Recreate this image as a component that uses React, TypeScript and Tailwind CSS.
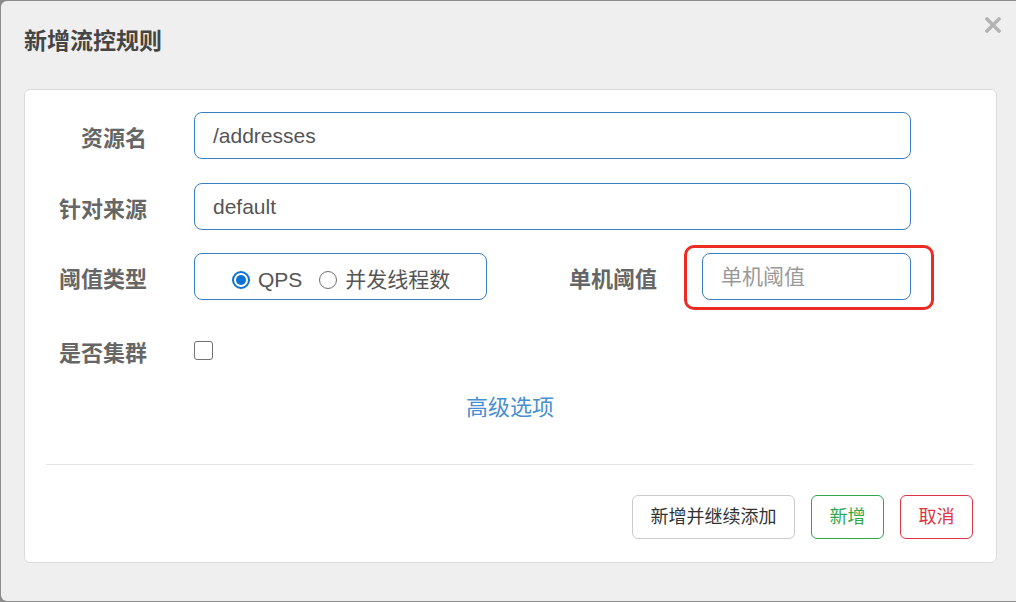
// 新增流控规则 — flow rule dialog

const font = "font-['Liberation_Sans','Noto_Sans_CJK_SC',sans-serif]";

function Label({ text, width = 'w-[101px]' }: { text: string; width?: string }) {
    return (
        <div className={`${width} shrink-0 text-right pt-[7px] text-[22px] leading-[30px] font-bold text-[#666]`}>
            {text}
        </div>
    );
}

function TextInput({ value, placeholder, width }: { value?: string; placeholder?: string; width: string }) {
    return (
        <div
            className={`${width} h-[47px] rounded-[8px] border border-[#3a7fc1] bg-white flex items-center pl-[18px] text-[21px] leading-[30px] ${
                value ? 'text-[#555]' : 'text-[#999]'
            }`}
        >
            {value || placeholder}
        </div>
    );
}

function Radio({ checked, label }: { checked?: boolean; label: string }) {
    return (
        <div className="flex items-center gap-[8px]">
            {checked ? (
                <span className="w-[18px] h-[18px] rounded-full border-2 border-[#0b72d9] flex items-center justify-center">
                    <span className="w-[10px] h-[10px] rounded-full bg-[#0b72d9]" />
                </span>
            ) : (
                <span className="w-[18px] h-[18px] rounded-full border-[1.5px] border-[#6f6f6f]" />
            )}
            <span className="text-[21px] leading-[30px] text-[#555]">{label}</span>
        </div>
    );
}

export default function App() {
    return (
        <div className={`w-[1016px] h-[602px] overflow-hidden bg-[#8c8c8c] pt-px pl-px ${font}`}>
            <div className="w-[1015px] h-[600px] rounded-l-md bg-[#efefef]">
                {/* Header */}
                <div className="h-[88px] flex items-start justify-between pl-[23px] pr-[15px]">
                    <h4 className="pt-[25px] text-[23px] leading-[30px] font-bold text-[#454545]">新增流控规则</h4>
                    <svg width="16" height="16" viewBox="0 0 16 16" className="mt-[16px]">
                        <path d="M2 2L14 14M14 2L2 14" stroke="#b3b3b3" strokeWidth="3.4" strokeLinecap="square" />
                    </svg>
                </div>

                {/* Body card */}
                <div className="ml-[23px] w-[973px] h-[474px] rounded-md border border-[#dcdcdc] bg-white pl-[21px] pr-[22px] pt-[22px]">
                    <div className="flex items-center h-[47px]">
                        <Label text="资源名" />
                        <div className="ml-[47px]">
                            <TextInput value="/addresses" width="w-[717px]" />
                        </div>
                    </div>

                    <div className="flex items-center h-[47px] mt-[24px]">
                        <Label text="针对来源" />
                        <div className="ml-[47px]">
                            <TextInput value="default" width="w-[717px]" />
                        </div>
                    </div>

                    <div className="flex items-center h-[47px] mt-[23px]">
                        <Label text="阈值类型" />
                        <div className="ml-[47px] w-[293px] h-[47px] rounded-[8px] border border-[#3a7fc1] flex items-center pl-[37px] pt-[7px] gap-[17px]">
                            <Radio checked label="QPS" />
                            <Radio label="并发线程数" />
                        </div>
                        <Label text="单机阈值" width="w-[170px]" />
                        <div className="relative ml-[45px]">
                            <TextInput placeholder="单机阈值" width="w-[209px]" />
                            <span className="absolute -left-[18px] -right-[23px] -top-[8px] -bottom-[10px] rounded-[10px] border-[3px] border-[#ec2b25]" />
                        </div>
                    </div>

                    <div className="flex items-center h-[47px] mt-[27px]">
                        <Label text="是否集群" />
                        <span className="ml-[47px] w-[19px] h-[19px] rounded-[3px] border-[1.5px] border-[#727272] bg-white" />
                    </div>

                    <div className="mt-[19px] text-center text-[22px] leading-[30px] text-[#4a8fd0]">高级选项</div>

                    <div className="mt-[41px] h-px bg-[#e5e5e5]" />

                    <div className="mt-[30px] flex justify-end gap-[16px] pr-px">
                        <button className="w-[163px] h-[44px] rounded-[6px] border border-[#cccccc] bg-white text-[18px] text-[#333]">
                            新增并继续添加
                        </button>
                        <button className="w-[73px] h-[44px] rounded-[6px] border border-[#2fa84f] bg-white text-[18px] text-[#2fa84f]">
                            新增
                        </button>
                        <button className="w-[73px] h-[44px] rounded-[6px] border border-[#dc3545] bg-white text-[18px] text-[#dc3545]">
                            取消
                        </button>
                    </div>
                </div>
            </div>
        </div>
    );
}
